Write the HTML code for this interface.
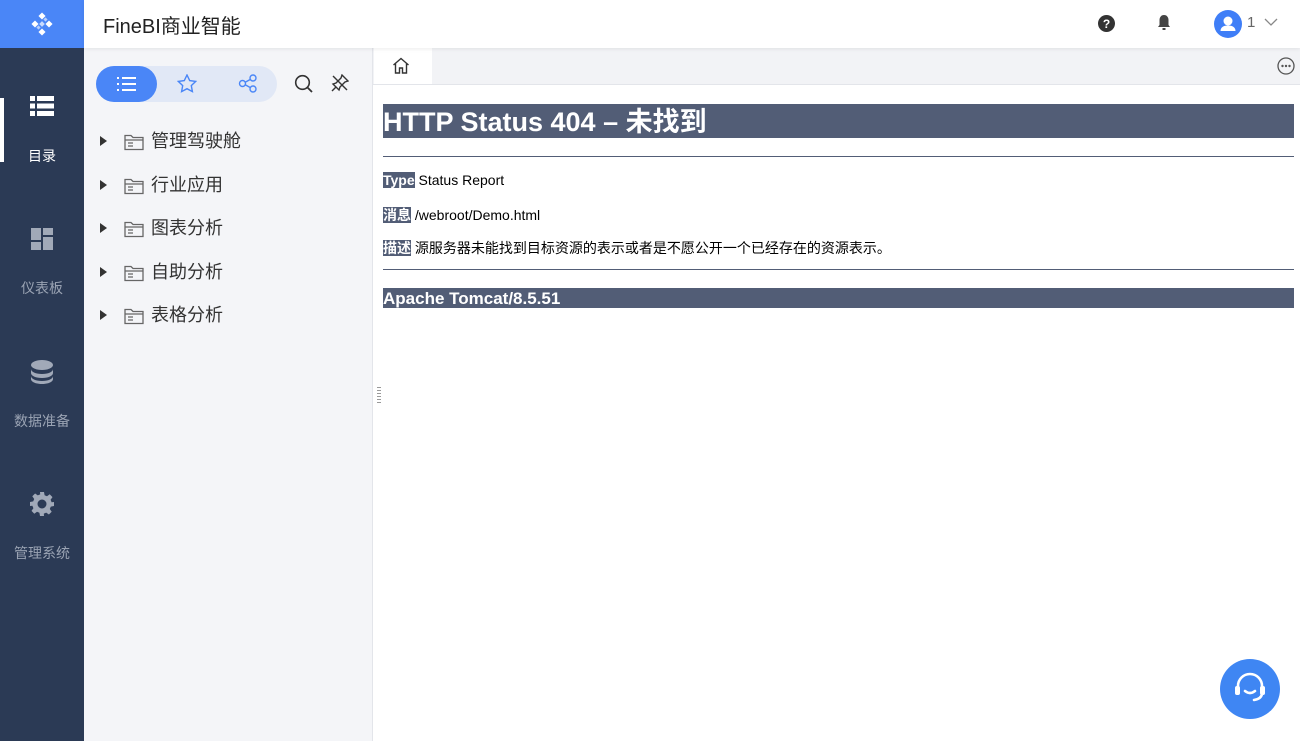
<!DOCTYPE html>
<html><head><meta charset="utf-8"><style>
*{margin:0;padding:0;box-sizing:border-box}
body{width:1300px;height:741px;overflow:hidden;font-family:"Liberation Sans","Noto Sans CJK SC",sans-serif;background:#fff;position:relative}
.abs{position:absolute}
#side{left:0;top:0;width:84px;height:741px;background:#2b3a55}
#logo{left:0;top:0;width:84px;height:48px;background:#4a86f7}
#top{left:84px;top:0;width:1216px;height:48px;background:#fff;box-shadow:0 1px 4px rgba(0,0,0,.08);z-index:2}
.nav{left:0;width:84px;text-align:center;color:#9aa3b3;font-size:14px}
#panel{left:84px;top:48px;width:289px;height:693px;background:#f4f5f8;border-right:1px solid #e3e5ea}
.tree{left:100px;font-size:18px;color:#333;height:20px;line-height:20px}
.tree .tri{position:absolute;left:0;top:5px;width:0;height:0;border-left:7px solid #333;border-top:5px solid transparent;border-bottom:5px solid transparent}
.tree svg{position:absolute;left:24px;top:3px}
.tree span{position:absolute;left:51px;top:0px;white-space:nowrap}
.bar{background:#525d76;color:#fff;font-weight:bold;left:383px;width:911px}
.line{font-size:14px;color:#000;left:383px;white-space:nowrap}
.lab{background:#525d76;color:#fff;font-weight:bold}
hr{position:absolute;left:383px;width:911px;border:0;border-top:1px solid #525d76}
</style></head><body>
<div id="side" class="abs"></div>
<div id="logo" class="abs"><svg class="abs" style="left:30px;top:12px" width="24" height="24" viewBox="0 0 24 24"><g fill="#fff"><rect x="9.5" y="1.5" width="5" height="5" transform="rotate(45 12 4)"/><rect x="2.5" y="9.5" width="5" height="5" transform="rotate(45 5 12)"/><rect x="16.5" y="9.5" width="5" height="5" transform="rotate(45 19 12)"/><rect x="9.5" y="17.5" width="5" height="5" transform="rotate(45 12 20)"/><rect x="10" y="10" width="4" height="4" transform="rotate(45 12 12)" opacity=".7"/><rect x="14" y="6" width="3" height="3" transform="rotate(45 15.5 7.5)" opacity=".6"/><rect x="7" y="14" width="3" height="3" transform="rotate(45 8.5 15.5)" opacity=".6"/></g></svg></div>
<div id="top" class="abs">
<div class="abs" style="left:19px;top:10px;font-size:20px;color:#222">FineBI商业智能</div>
<svg class="abs" style="left:1014px;top:15px" width="17" height="17" viewBox="0 0 17 17"><circle cx="8.5" cy="8.5" r="8.5" fill="#333"/><text x="8.5" y="13" font-size="12" font-weight="bold" fill="#fff" text-anchor="middle" font-family="Liberation Sans">?</text></svg>
<svg class="abs" style="left:1073px;top:14px" width="14" height="18" viewBox="0 0 14 18"><path d="M7 1C4 1 2.5 3.5 2.5 6v5L1 13h12l-1.5-2V6C11.5 3.5 10 1 7 1z" fill="#444"/><rect x="5.5" y="14" width="3" height="2" fill="#444"/></svg>
<svg class="abs" style="left:1130px;top:10px" width="28" height="28" viewBox="0 0 28 28"><circle cx="14" cy="14" r="14" fill="#3f7ef7"/><circle cx="14" cy="11" r="4.5" fill="#fff"/><path d="M6.5 21c0-4 3.5-5.5 7.5-5.5s7.5 1.5 7.5 5.5z" fill="#fff"/></svg>
<div class="abs" style="left:1163px;top:14px;font-size:15px;color:#666">1</div>
<svg class="abs" style="left:1180px;top:18px" width="14" height="8"><path d="M1 1l6 6 6-6" stroke="#888" fill="none" stroke-width="1.3"/></svg>
</div>
<!-- nav -->
<div class="abs" style="left:0;top:98px;width:4px;height:64px;background:#fff"></div>
<svg class="abs" style="left:30px;top:96px" width="24" height="20" viewBox="0 0 24 20"><g fill="#fff"><rect x="0" y="0" width="5" height="5"/><rect x="7" y="0" width="17" height="5"/><rect x="0" y="7.5" width="5" height="5"/><rect x="7" y="7.5" width="17" height="5"/><rect x="0" y="15" width="5" height="5"/><rect x="7" y="15" width="17" height="5"/></g></svg>
<div class="abs nav" style="top:146px;color:#fff">目录</div>
<svg class="abs" style="left:31px;top:228px" width="22" height="22"><g fill="#a1a9b8"><rect x="0" y="0" width="10" height="12"/><rect x="12" y="0" width="10" height="7"/><rect x="0" y="14" width="10" height="8"/><rect x="12" y="9" width="10" height="13"/></g></svg>
<div class="abs nav" style="top:278px">仪表板</div>
<svg class="abs" style="left:30px;top:360px" width="24" height="24"><g fill="#a1a9b8"><ellipse cx="12" cy="5" rx="11" ry="5"/><path d="M1 9c0 3 5 5 11 5s11-2 11-5v4c0 3-5 5-11 5S1 16 1 13z"/><path d="M1 16c0 3 5 5 11 5s11-2 11-5v3c0 3-5 5-11 5S1 22 1 19z"/></g></svg>
<div class="abs nav" style="top:411px">数据准备</div>
<svg class="abs" style="left:30px;top:492px" width="24" height="24" viewBox="0 0 24 24"><path fill="#a1a9b8" fill-rule="evenodd" d="M10 0h4l.6 3.2 2.4 1 2.7-1.9 2.8 2.8-1.9 2.7 1 2.4L24 10v4l-3.2.6-1 2.4 1.9 2.7-2.8 2.8-2.7-1.9-2.4 1L14 24h-4l-.6-3.2-2.4-1-2.7 1.9-2.8-2.8 1.9-2.7-1-2.4L0 14v-4l3.2-.6 1-2.4-1.9-2.7 2.8-2.8 2.7 1.9 2.4-1zM12 7.5a4.5 4.5 0 1 0 0 9 4.5 4.5 0 0 0 0-9z"/></svg>
<div class="abs nav" style="top:543px">管理系统</div>
<!-- panel -->
<div id="panel" class="abs"></div>
<div class="abs" style="left:96px;top:66px;width:181px;height:36px;border-radius:18px;background:#e1e8f6"></div>
<div class="abs" style="left:96px;top:66px;width:61px;height:36px;border-radius:18px;background:#4a86f7"></div>
<svg class="abs" style="left:117px;top:76px" width="20" height="16"><g fill="#fff"><rect x="0" y="1" width="2" height="2"/><rect x="5" y="1" width="14" height="2"/><rect x="0" y="7" width="2" height="2"/><rect x="5" y="7" width="14" height="2"/><rect x="0" y="13" width="2" height="2"/><rect x="5" y="13" width="14" height="2"/></g></svg>
<svg class="abs" style="left:177px;top:74px" width="20" height="19" viewBox="0 0 20 19"><path d="M10 1l2.7 5.6 6 .8-4.4 4.2 1.1 6L10 14.7 4.6 17.6l1.1-6L1.3 7.4l6-.8z" fill="none" stroke="#4a86f7" stroke-width="1.4"/></svg>
<svg class="abs" style="left:238px;top:74px" width="20" height="19"><g fill="none" stroke="#4a86f7" stroke-width="1.4"><circle cx="4.5" cy="9.5" r="3"/><circle cx="15" cy="4" r="3"/><circle cx="15" cy="15" r="3"/><path d="M7.2 8.2l5.2-2.8M7.2 10.8l5.2 2.8"/></g></svg>
<svg class="abs" style="left:294px;top:74px" width="20" height="20"><circle cx="8.5" cy="8.5" r="6.8" fill="none" stroke="#333" stroke-width="1.6"/><path d="M13.5 13.5l4.5 4.5" stroke="#333" stroke-width="1.8"/></svg>
<svg class="abs" style="left:331px;top:74px" width="18" height="18" viewBox="0 0 18 18"><g fill="none" stroke="#333" stroke-width="1.4"><path d="M11 1l6 6-3 1-5 5-1 3-6-6 3-1 5-5z"/><path d="M5 13l-4 4"/><path d="M2 2l14 14"/></g></svg>
<div class="abs tree" style="top:131px"><i class="tri"></i><svg width="20" height="17" viewBox="0 0 20 17"><path d="M1 1.5h6l2 2h10v12H1z" fill="none" stroke="#666" stroke-width="1.3"/><path d="M1 6h18M4 9h5M4 12h5" stroke="#666" stroke-width="1.2"/></svg><span>管理驾驶舱</span></div>
<div class="abs tree" style="top:175px"><i class="tri"></i><svg width="20" height="17" viewBox="0 0 20 17"><path d="M1 1.5h6l2 2h10v12H1z" fill="none" stroke="#666" stroke-width="1.3"/><path d="M1 6h18M4 9h5M4 12h5" stroke="#666" stroke-width="1.2"/></svg><span>行业应用</span></div>
<div class="abs tree" style="top:218px"><i class="tri"></i><svg width="20" height="17" viewBox="0 0 20 17"><path d="M1 1.5h6l2 2h10v12H1z" fill="none" stroke="#666" stroke-width="1.3"/><path d="M1 6h18M4 9h5M4 12h5" stroke="#666" stroke-width="1.2"/></svg><span>图表分析</span></div>
<div class="abs tree" style="top:262px"><i class="tri"></i><svg width="20" height="17" viewBox="0 0 20 17"><path d="M1 1.5h6l2 2h10v12H1z" fill="none" stroke="#666" stroke-width="1.3"/><path d="M1 6h18M4 9h5M4 12h5" stroke="#666" stroke-width="1.2"/></svg><span>自助分析</span></div>
<div class="abs tree" style="top:305px"><i class="tri"></i><svg width="20" height="17" viewBox="0 0 20 17"><path d="M1 1.5h6l2 2h10v12H1z" fill="none" stroke="#666" stroke-width="1.3"/><path d="M1 6h18M4 9h5M4 12h5" stroke="#666" stroke-width="1.2"/></svg><span>表格分析</span></div>
<!-- tabs -->
<div class="abs" style="left:373px;top:48px;width:927px;height:37px;background:#f2f3f6;border-bottom:1px solid #e3e5ea"></div>
<div class="abs" style="left:374px;top:48px;width:58px;height:36px;background:#fff"></div>
<svg class="abs" style="left:392px;top:57px" width="18" height="17" viewBox="0 0 18 17"><path d="M1.5 8L9 1.5 16.5 8M3.5 6.5V16h4v-5h3v5h4V6.5" fill="none" stroke="#333" stroke-width="1.4"/></svg>
<svg class="abs" style="left:1277px;top:57px" width="18" height="18"><circle cx="9" cy="9" r="8" fill="none" stroke="#555" stroke-width="1.3"/><g fill="#555"><circle cx="5.5" cy="9" r="1.2"/><circle cx="9" cy="9" r="1.2"/><circle cx="12.5" cy="9" r="1.2"/></g></svg>
<div class="abs" style="left:377px;top:387px;width:4px;height:16px;background:repeating-linear-gradient(#999 0 1px,transparent 1px 3px)"></div>
<!-- content -->
<div class="abs bar" style="top:104px;height:34px;font-size:27px;line-height:36px">HTTP Status 404 – 未找到</div>
<hr style="top:156px">
<div class="abs line" style="top:172px"><span class="lab">Type</span> Status Report</div>
<div class="abs line" style="top:205px"><span class="lab">消息</span> /webroot/Demo.html</div>
<div class="abs line" style="top:238px"><span class="lab">描述</span> 源服务器未能找到目标资源的表示或者是不愿公开一个已经存在的资源表示。</div>
<hr style="top:269px">
<div class="abs bar" style="top:288px;height:20px;font-size:17px;line-height:21px">Apache Tomcat/8.5.51</div>
<svg class="abs" style="left:1219px;top:658px" width="62" height="62" viewBox="0 0 62 62"><circle cx="31" cy="31" r="30" fill="#3f86f3"/><g fill="none" stroke="#fff" stroke-width="2.6" stroke-linecap="round"><path d="M19 31v-3a12 12 0 0 1 24 0v3"/><path d="M26 33q5 4 10 0"/><path d="M43 36q-1 5-8 6"/></g><rect x="16" y="28" width="5" height="9" rx="2" fill="#fff"/><rect x="41" y="28" width="5" height="9" rx="2" fill="#fff"/></svg>
</body></html>
